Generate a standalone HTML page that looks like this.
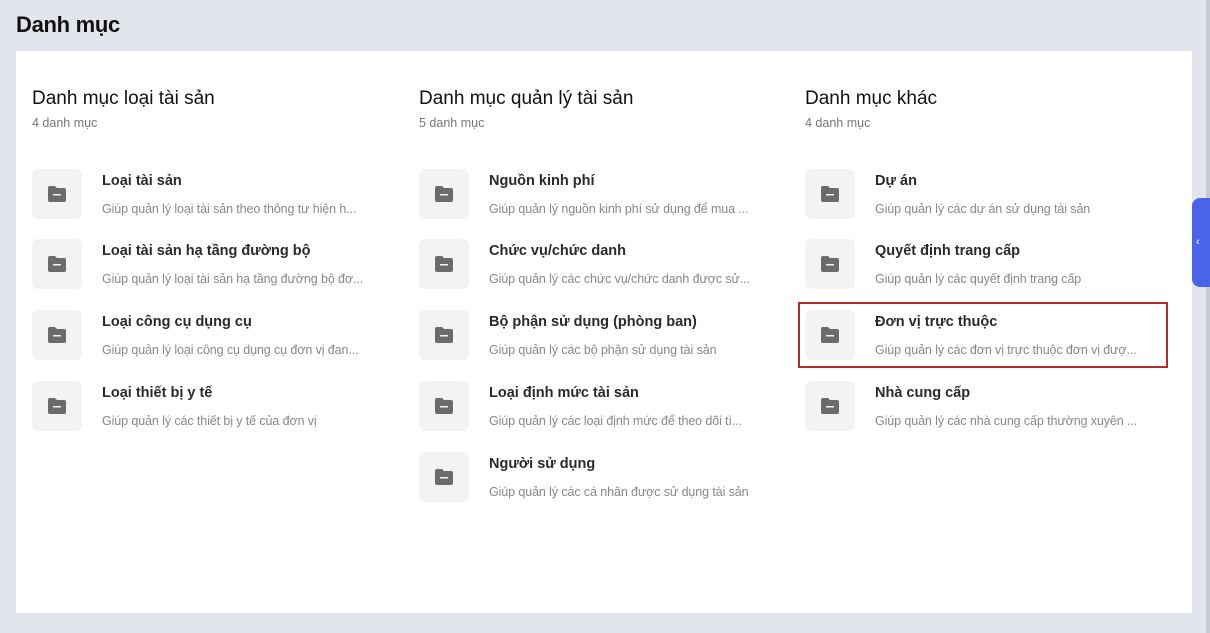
<!DOCTYPE html>
<html><head><meta charset="utf-8"><style>
*{margin:0;padding:0;box-sizing:border-box}
body{width:1210px;height:633px;background:#e3e5ec;font-family:"Liberation Sans",sans-serif;position:relative;overflow:hidden}
h1{position:absolute;left:16px;top:12px;font-size:22px;font-weight:bold;color:#111;letter-spacing:-0.3px}
.panel{position:absolute;left:16px;top:51px;width:1176px;height:562px;background:#fff}
.col{position:absolute;top:0}
.col h2{position:absolute;top:37px;left:0;font-size:19px;font-weight:normal;color:#111;white-space:nowrap}
.col .cnt{position:absolute;top:65px;left:0;font-size:12.5px;color:#777;white-space:nowrap}
.item{position:absolute;left:0;width:360px;height:50px}
.ic{position:absolute;left:0;top:0;width:50px;height:50px;background:#f3f3f3;border-radius:6px}
.ic svg{position:absolute;left:16px;top:17px}
.t{position:absolute;left:70px;top:4px;font-size:14.5px;font-weight:bold;color:#2a2a2a;white-space:nowrap}
.d{position:absolute;left:70px;top:33px;font-size:12.5px;color:#888;white-space:nowrap;letter-spacing:-0.1px}
.red{position:absolute;left:782px;top:251px;width:370px;height:66px;border:2px solid #b72a2a}
.tab{position:absolute;left:1192px;top:198px;width:18px;height:89px;background:#4a63e8;border-radius:8px 0 0 8px;color:#fff;font-size:11px;line-height:89px;padding-left:4px}
.edge{position:absolute;left:1206px;top:0;width:4px;height:633px;background:#c8cad0}
</style></head><body>
<h1>Danh mục</h1>
<div class="panel">
<div class="col" style="left:16px">
<h2>Danh mục loại tài sản</h2><div class="cnt">4 danh mục</div>
<div class="item" style="top:118px"><div class="ic"><svg width="18" height="16"><path d="M0 2a2 2 0 0 1 2-2h5l2 2h7a2 2 0 0 1 2 2v10a2 2 0 0 1-2 2H2a2 2 0 0 1-2-2z" fill="#6b6b6b"/><rect x="5" y="8" width="8" height="1.5" fill="#f3f3f3"/></svg></div><div class="t">Loại tài sản</div><div class="d">Giúp quản lý loại tài sản theo thông tư hiện h...</div></div>
<div class="item" style="top:188px"><div class="ic"><svg width="18" height="16"><path d="M0 2a2 2 0 0 1 2-2h5l2 2h7a2 2 0 0 1 2 2v10a2 2 0 0 1-2 2H2a2 2 0 0 1-2-2z" fill="#6b6b6b"/><rect x="5" y="8" width="8" height="1.5" fill="#f3f3f3"/></svg></div><div class="t">Loại tài sản hạ tầng đường bộ</div><div class="d">Giúp quản lý loại tài sản hạ tầng đường bộ đơ...</div></div>
<div class="item" style="top:259px"><div class="ic"><svg width="18" height="16"><path d="M0 2a2 2 0 0 1 2-2h5l2 2h7a2 2 0 0 1 2 2v10a2 2 0 0 1-2 2H2a2 2 0 0 1-2-2z" fill="#6b6b6b"/><rect x="5" y="8" width="8" height="1.5" fill="#f3f3f3"/></svg></div><div class="t">Loại công cụ dụng cụ</div><div class="d">Giúp quản lý loại công cụ dụng cụ đơn vị đan...</div></div>
<div class="item" style="top:330px"><div class="ic"><svg width="18" height="16"><path d="M0 2a2 2 0 0 1 2-2h5l2 2h7a2 2 0 0 1 2 2v10a2 2 0 0 1-2 2H2a2 2 0 0 1-2-2z" fill="#6b6b6b"/><rect x="5" y="8" width="8" height="1.5" fill="#f3f3f3"/></svg></div><div class="t">Loại thiết bị y tế</div><div class="d">Giúp quản lý các thiết bị y tế của đơn vị</div></div>
</div>
<div class="col" style="left:403px">
<h2>Danh mục quản lý tài sản</h2><div class="cnt">5 danh mục</div>
<div class="item" style="top:118px"><div class="ic"><svg width="18" height="16"><path d="M0 2a2 2 0 0 1 2-2h5l2 2h7a2 2 0 0 1 2 2v10a2 2 0 0 1-2 2H2a2 2 0 0 1-2-2z" fill="#6b6b6b"/><rect x="5" y="8" width="8" height="1.5" fill="#f3f3f3"/></svg></div><div class="t">Nguồn kinh phí</div><div class="d">Giúp quản lý nguồn kinh phí sử dụng để mua ...</div></div>
<div class="item" style="top:188px"><div class="ic"><svg width="18" height="16"><path d="M0 2a2 2 0 0 1 2-2h5l2 2h7a2 2 0 0 1 2 2v10a2 2 0 0 1-2 2H2a2 2 0 0 1-2-2z" fill="#6b6b6b"/><rect x="5" y="8" width="8" height="1.5" fill="#f3f3f3"/></svg></div><div class="t">Chức vụ/chức danh</div><div class="d">Giúp quản lý các chức vụ/chức danh được sử...</div></div>
<div class="item" style="top:259px"><div class="ic"><svg width="18" height="16"><path d="M0 2a2 2 0 0 1 2-2h5l2 2h7a2 2 0 0 1 2 2v10a2 2 0 0 1-2 2H2a2 2 0 0 1-2-2z" fill="#6b6b6b"/><rect x="5" y="8" width="8" height="1.5" fill="#f3f3f3"/></svg></div><div class="t">Bộ phận sử dụng (phòng ban)</div><div class="d">Giúp quản lý các bộ phận sử dụng tài sản</div></div>
<div class="item" style="top:330px"><div class="ic"><svg width="18" height="16"><path d="M0 2a2 2 0 0 1 2-2h5l2 2h7a2 2 0 0 1 2 2v10a2 2 0 0 1-2 2H2a2 2 0 0 1-2-2z" fill="#6b6b6b"/><rect x="5" y="8" width="8" height="1.5" fill="#f3f3f3"/></svg></div><div class="t">Loại định mức tài sản</div><div class="d">Giúp quản lý các loại định mức để theo dõi tì...</div></div>
<div class="item" style="top:401px"><div class="ic"><svg width="18" height="16"><path d="M0 2a2 2 0 0 1 2-2h5l2 2h7a2 2 0 0 1 2 2v10a2 2 0 0 1-2 2H2a2 2 0 0 1-2-2z" fill="#6b6b6b"/><rect x="5" y="8" width="8" height="1.5" fill="#f3f3f3"/></svg></div><div class="t">Người sử dụng</div><div class="d">Giúp quản lý các cá nhân được sử dụng tài sản</div></div>
</div>
<div class="col" style="left:789px">
<h2>Danh mục khác</h2><div class="cnt">4 danh mục</div>
<div class="item" style="top:118px"><div class="ic"><svg width="18" height="16"><path d="M0 2a2 2 0 0 1 2-2h5l2 2h7a2 2 0 0 1 2 2v10a2 2 0 0 1-2 2H2a2 2 0 0 1-2-2z" fill="#6b6b6b"/><rect x="5" y="8" width="8" height="1.5" fill="#f3f3f3"/></svg></div><div class="t">Dự án</div><div class="d">Giúp quản lý các dự án sử dụng tài sản</div></div>
<div class="item" style="top:188px"><div class="ic"><svg width="18" height="16"><path d="M0 2a2 2 0 0 1 2-2h5l2 2h7a2 2 0 0 1 2 2v10a2 2 0 0 1-2 2H2a2 2 0 0 1-2-2z" fill="#6b6b6b"/><rect x="5" y="8" width="8" height="1.5" fill="#f3f3f3"/></svg></div><div class="t">Quyết định trang cấp</div><div class="d">Giúp quản lý các quyết định trang cấp</div></div>
<div class="item" style="top:259px"><div class="ic"><svg width="18" height="16"><path d="M0 2a2 2 0 0 1 2-2h5l2 2h7a2 2 0 0 1 2 2v10a2 2 0 0 1-2 2H2a2 2 0 0 1-2-2z" fill="#6b6b6b"/><rect x="5" y="8" width="8" height="1.5" fill="#f3f3f3"/></svg></div><div class="t">Đơn vị trực thuộc</div><div class="d">Giúp quản lý các đơn vị trực thuộc đơn vị đượ...</div></div>
<div class="item" style="top:330px"><div class="ic"><svg width="18" height="16"><path d="M0 2a2 2 0 0 1 2-2h5l2 2h7a2 2 0 0 1 2 2v10a2 2 0 0 1-2 2H2a2 2 0 0 1-2-2z" fill="#6b6b6b"/><rect x="5" y="8" width="8" height="1.5" fill="#f3f3f3"/></svg></div><div class="t">Nhà cung cấp</div><div class="d">Giúp quản lý các nhà cung cấp thường xuyên ...</div></div>
</div>
<div class="red"></div>
</div>
<div class="edge"></div>
<div class="tab">‹</div>
</body></html>
